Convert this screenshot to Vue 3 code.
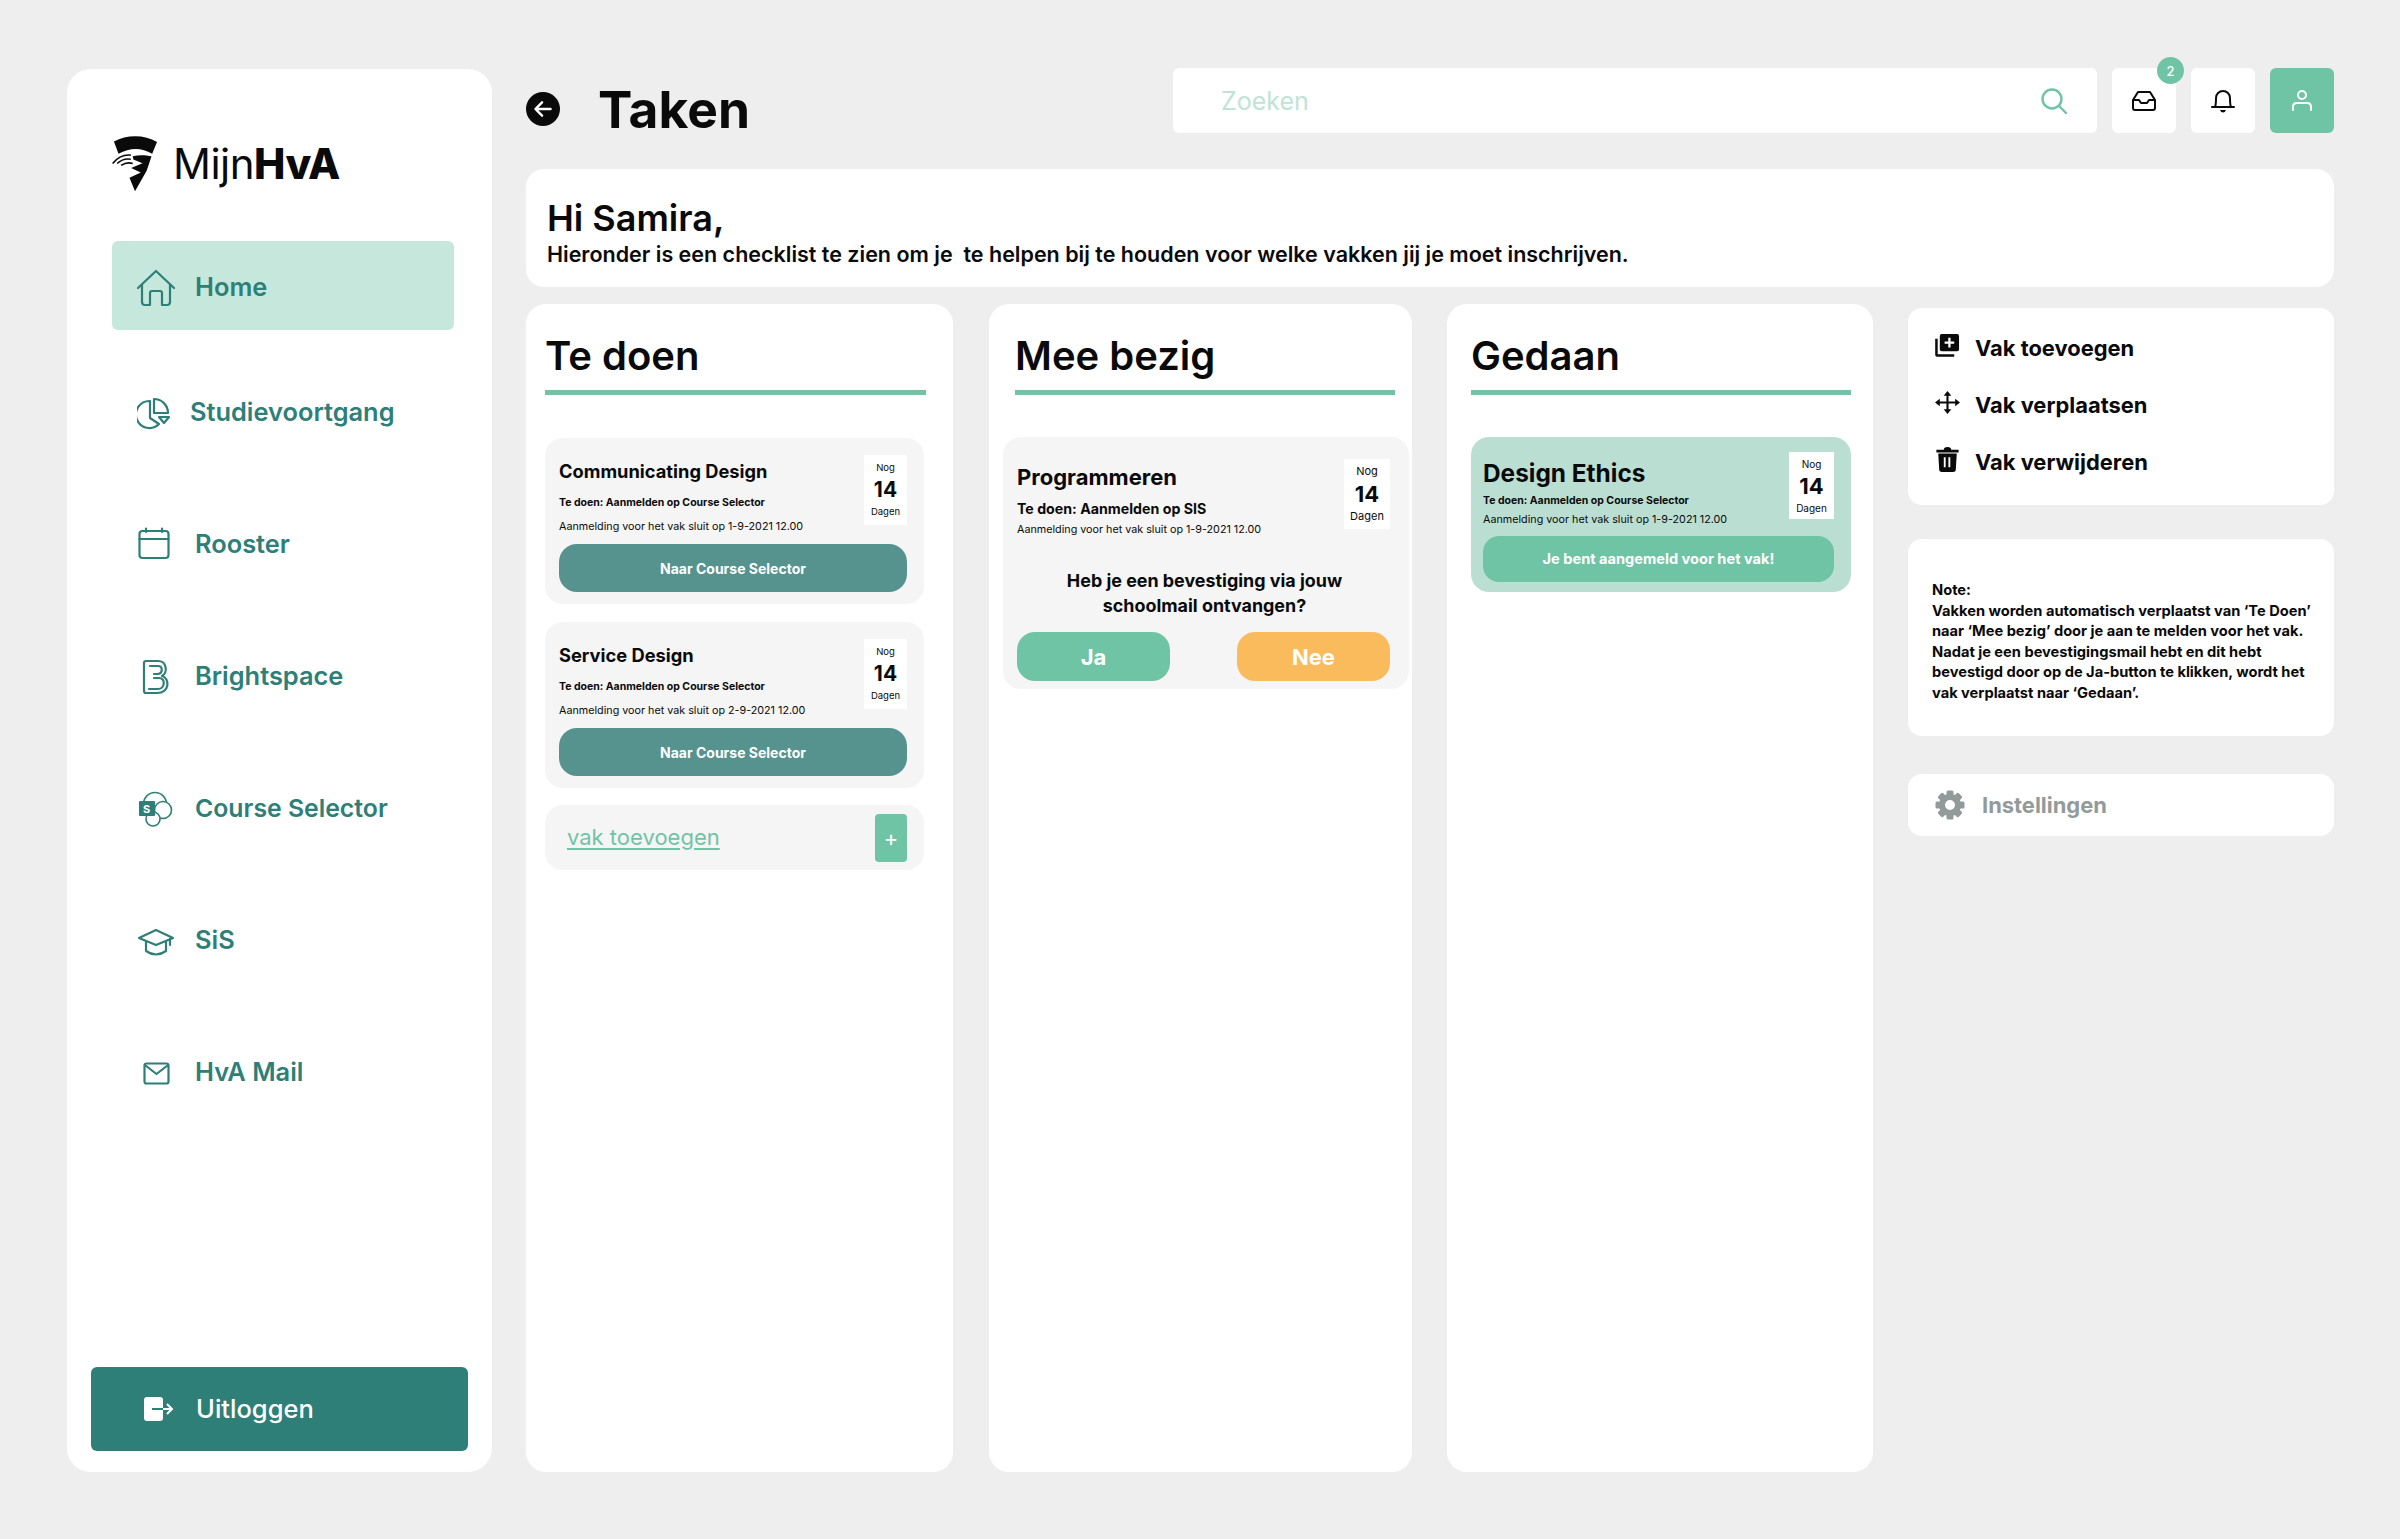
<script setup>
const navItems = [
  { label: 'Home', icon: 'home', active: true },
  { label: 'Studievoortgang', icon: 'chart' },
  { label: 'Rooster', icon: 'calendar' },
  { label: 'Brightspace', icon: 'bright' },
  { label: 'Course Selector', icon: 'course' },
  { label: 'SiS', icon: 'cap' },
  { label: 'HvA Mail', icon: 'mail' }
];

const todo = [
  { title: 'Communicating Design', date: '1-9-2021' },
  { title: 'Service Design', date: '2-9-2021' }
];
</script>

<template>
  <div class="page">
    <aside class="sidebar">
      <div class="logo">
        <svg class="logo-mark" viewBox="34 38 142 180">
          <path d="M40 60C80 38 135 38 173 62L158 98C125 78 90 78 54 98Z" fill="#0a0a0a" />
          <path d="M98 106C118 100 138 102 156 106L141 150L105 214L88 172L123 156L93 142L128 127L100 116Z" fill="#0a0a0a" />
          <path d="M36 128C50 110 68 100 92 102M50 128C62 117 78 112 92 115M62 134Q80 122 98 128" fill="none" stroke="#0a0a0a" stroke-width="5" />
        </svg>
        <span class="logo-text">Mijn<b>HvA</b></span>
      </div>

      <nav class="nav">
        <a v-for="item in navItems" :key="item.label" class="nav-item" :class="[item.icon, { active: item.active }]">
          <svg class="nav-icon" viewBox="0 0 38 38" fill="none" stroke="#2d7f77" stroke-width="2.200" stroke-linecap="round" stroke-linejoin="round">
            <template v-if="item.icon === 'home'">
              <path d="M1 19L19 2L37 19" />
              <path d="M5 16V33Q5 36 8 36H13V24Q13 22 15 22H23Q25 22 25 24V36H30Q33 36 33 33V16" />
            </template>
            <template v-if="item.icon === 'chart'">
              <path d="M13 7A13.500 13.500 0 1 0 22 30L13 24Z" />
              <path d="M17 5A14 14 0 0 1 31 19H17Z" />
              <path d="M22 23H32L27 29Z" />
            </template>
            <template v-if="item.icon === 'calendar'">
              <rect x="2.500" y="5" width="29" height="27" rx="3" />
              <path d="M2.500 13H31.500M9 2.500V6M25 2.500V6" />
            </template>
            <template v-if="item.icon === 'bright'">
              <path d="M9 3H21C30 3 31 15 25 18C33 20 33 35 20 35H9Q7 35 7 33V5Q7 3 9 3Z" />
              <path d="M13 8H21C26 8 26 15 21 16H17M17 20H22C29 20 28 31 21 31H12" />
            </template>
            <template v-if="item.icon === 'course'">
              <circle cx="18" cy="14" r="11.500" stroke-width="1.600" fill="#fff" />
              <circle cx="26" cy="20" r="8.500" stroke-width="1.600" fill="#fff" />
              <circle cx="16" cy="29" r="7" stroke-width="1.600" fill="#fff" />
              <rect x="2" y="11" width="16" height="15" rx="1" fill="#2d7f77" stroke="none" />
              <text x="6" y="23" class="icon-s">S</text>
            </template>
            <template v-if="item.icon === 'cap'">
              <path d="M19 8L36 16L19 23L2 16Z" />
              <path d="M9 20V29Q19 36 29 29V20M33 17V23" />
            </template>
            <template v-if="item.icon === 'mail'">
              <rect x="7.500" y="9.500" width="24" height="20" rx="2" />
              <path d="M8.500 11.500L19.500 20L30.500 11.500" />
            </template>
          </svg>
          <span>{{ item.label }}</span>
        </a>
      </nav>

      <a class="logout">
        <svg class="logout-icon" viewBox="0 0 29 24">
          <rect width="19" height="24" rx="3" fill="#fff" />
          <path d="M8 12H19" stroke="#2d7f77" stroke-width="2" />
          <path d="M19 12H27M23 7L28 12L23 17" fill="none" stroke="#fff" stroke-width="2" />
        </svg>
        <span>Uitloggen</span>
      </a>
    </aside>

    <main class="main">
      <header class="topbar">
        <div class="page-title">
          <span class="back">
            <svg viewBox="0 0 36 36"><circle cx="18" cy="18" r="18" fill="#0a0a0a" /><path d="M26 18H11M17 11L10 18L17 25" fill="none" stroke="#fff" stroke-width="2.600" stroke-linecap="round" stroke-linejoin="round" /></svg>
          </span>
          <h1>Taken</h1>
        </div>
        <div class="top-actions">
          <div class="search">
            <span>Zoeken</span>
            <svg viewBox="0 0 26 26" fill="none" stroke="#6fc4a5" stroke-width="2.400" stroke-linecap="round"><circle cx="11" cy="11" r="9.500" /><path d="M18 18L25 25" /></svg>
          </div>
          <div class="icon-btn">
            <svg width="24" height="20" viewBox="0 0 24 20" fill="none" stroke="#0a0a0a" stroke-width="2" stroke-linejoin="round"><path d="M6 1H18L23 9V17Q23 19 21 19H3Q1 19 1 17V9Z" /><path d="M1.500 9H7L9 12H15L17 9H22.500" /></svg>
            <span class="badge">2</span>
          </div>
          <div class="icon-btn">
            <svg width="24" height="24" viewBox="0 0 24 24" fill="none" stroke="#0a0a0a" stroke-width="2" stroke-linecap="round"><path d="M1 18H23M4 18C5 16 5 14 5 9A7 7 0 0 1 19 9C19 14 19 16 20 18" /><path d="M9 21H15Q14 23.500 12 23.500Q10 23.500 9 21Z" fill="#0a0a0a" stroke="none" /></svg>
          </div>
          <div class="icon-btn user">
            <svg width="20" height="21" viewBox="0 0 20 21" fill="none" stroke="#fff" stroke-width="2" stroke-linecap="round"><circle cx="10" cy="5" r="4" /><path d="M1 20V17Q1 13 5 13H15Q19 13 19 17V20" /></svg>
          </div>
        </div>
      </header>

      <section class="greeting">
        <h2>Hi Samira,</h2>
        <p>Hieronder is een checklist te zien om je&nbsp; te helpen bij te houden voor welke vakken jij je moet inschrijven.</p>
      </section>

      <div class="board">
        <section class="column col-todo">
          <h3>Te doen</h3>
          <div class="cards">
            <article v-for="c in todo" :key="c.title" class="card">
              <div class="card-top">
                <div>
                  <h4>{{ c.title }}</h4>
                  <p class="what">Te doen: Aanmelden op Course Selector</p>
                  <p class="when">Aanmelding voor het vak sluit op {{ c.date }} 12.00</p>
                </div>
                <div class="days"><small>Nog</small><b>14</b><small>Dagen</small></div>
              </div>
              <button class="btn-dark">Naar Course Selector</button>
            </article>
            <div class="add-row">
              <a>vak toevoegen</a>
              <span class="plus">+</span>
            </div>
          </div>
        </section>

        <section class="column col-busy">
          <h3>Mee bezig</h3>
          <article class="card card-busy">
            <div class="card-top">
              <div>
                <h4>Programmeren</h4>
                <p class="what">Te doen: Aanmelden op SIS</p>
                <p class="when">Aanmelding voor het vak sluit op 1-9-2021 12.00</p>
              </div>
              <div class="days"><small>Nog</small><b>14</b><small>Dagen</small></div>
            </div>
            <p class="question">Heb je een bevestiging via jouw schoolmail ontvangen?</p>
            <div class="answers">
              <button class="btn-yes">Ja</button>
              <button class="btn-no">Nee</button>
            </div>
          </article>
        </section>

        <section class="column col-done">
          <h3>Gedaan</h3>
          <article class="card card-done">
            <div class="card-top">
              <div>
                <h4>Design Ethics</h4>
                <p class="what">Te doen: Aanmelden op Course Selector</p>
                <p class="when">Aanmelding voor het vak sluit op 1-9-2021 12.00</p>
              </div>
              <div class="days"><small>Nog</small><b>14</b><small>Dagen</small></div>
            </div>
            <button class="btn-done">Je bent aangemeld voor het vak!</button>
          </article>
        </section>

        <div class="side">
          <div class="panel actions">
            <div class="action">
              <svg viewBox="0 0 26 24"><path d="M7 0H23Q25 0 25 2V16Q25 18 23 18H7Q5 18 5 16V2Q5 0 7 0Z" fill="#0a0a0a" /><path d="M15 4V14M10 9H20" stroke="#fff" stroke-width="2.400" /><path d="M1.500 5V21Q1.500 22.500 3 22.500H20" fill="none" stroke="#0a0a0a" stroke-width="2.600" /></svg>
              <span>Vak toevoegen</span>
            </div>
            <div class="action">
              <svg viewBox="0 0 26 24"><path d="M13 3V21M3 12H23" stroke="#0a0a0a" stroke-width="2.200" /><path d="M13 0L17 5H9ZM13 24L17 19H9ZM0 12L5 8V16ZM26 12L21 8V16Z" fill="#0a0a0a" /></svg>
              <span>Vak verplaatsen</span>
            </div>
            <div class="action">
              <svg viewBox="0 0 26 27"><path d="M9 3Q9 0 13 0Q17 0 17 3H25V6H1V3Z" fill="#0a0a0a" /><path d="M3 7H23L22 24Q22 27 19 27H7Q4 27 4 24Z" fill="#0a0a0a" /><path d="M10 11V22M15 11V22" stroke="#fff" stroke-width="2" /></svg>
              <span>Vak verwijderen</span>
            </div>
          </div>
          <div class="panel note">
            <p>Note:<br />Vakken worden automatisch verplaatst van ‘Te Doen’ naar ‘Mee bezig’ door je aan te melden voor het vak. Nadat je een bevestigingsmail hebt en dit hebt bevestigd door op de Ja-button te klikken, wordt het vak verplaatst naar ‘Gedaan’.</p>
          </div>
          <div class="panel settings">
            <svg viewBox="0 0 30 30">
              <rect v-for="a in [0, 45, 90, 135]" :key="a" x="11.500" y="0.500" width="7" height="29" rx="1.500" fill="#929a9a" :transform="`rotate(${a} 15 15)`" />
              <circle cx="15" cy="15" r="8" fill="#fff" stroke="#929a9a" stroke-width="6" />
            </svg>
            <span>Instellingen</span>
          </div>
        </div>
      </div>
    </main>
  </div>
</template>

<style scoped>
.page {
  width: 2400px;
  height: 1539px;
  box-sizing: border-box;
  padding: 68px 66px 67px 67px;
  display: flex;
  gap: 34px;
  font-family: Inter, "Open Sans", sans-serif;
  color: #0a0a0a;
}

.sidebar {
  width: 425px;
  margin-top: 1px;
  background: #fff;
  border-radius: 24px;
  display: flex;
  flex-direction: column;
  padding: 0 24px 21px;
  box-sizing: border-box;
}

.logo {
  display: flex;
  align-items: center;
  gap: 15px;
  margin: 64px 0 0 21px;
  height: 60px;
}
.logo-mark { width: 46px; height: 59px; flex: none; }
.logo-text { font-size: 42px; font-weight: 400; letter-spacing: -0.500px; }
.logo-text b { font-weight: 800; }

.nav { display: flex; flex-direction: column; margin-top: 48px; gap: 42px; }
.nav-item {
  height: 90px;
  margin: 0 14px 0 21px;
  padding-left: 25px;
  display: flex;
  align-items: center;
  gap: 20px;
  color: #2d7f77;
  font-size: 25.400px;
  font-weight: 600;
  border-radius: 6px;
}
.nav-item span { margin-top: -3px; }
.nav-item.active {
  background: #c6e7db;
  height: 89px;
  box-sizing: border-box;
  padding-top: 5px;
  margin-bottom: -4px;
}
.nav-item.chart { gap: 15px; }
.nav-item.course { font-size: 24.800px; }
.nav-icon { width: 38px; height: 38px; flex: none; }
.icon-s { font-size: 11px; font-weight: 700; fill: #fff; stroke: none; }

.logout {
  margin-top: auto;
  height: 84px;
  background: #2d7f77;
  border-radius: 6px;
  color: #fff;
  display: flex;
  align-items: center;
  gap: 23px;
  padding-left: 53px;
  font-size: 25.500px;
  font-weight: 500;
}
.logout span { margin-top: -2px; }
.logout-icon { width: 29px; height: 24px; }

.main { flex: 1; display: flex; flex-direction: column; min-width: 0; }

.topbar { display: flex; justify-content: space-between; height: 65px; }
.page-title { display: flex; align-items: center; gap: 38px; height: 80px; }
.back { width: 34px; height: 34px; margin-top: 2px; }
.back svg { width: 34px; height: 34px; display: block; }
h1 { font-size: 51.500px; font-weight: 700; margin: 2px 0 0; }

.top-actions { display: flex; gap: 15px; }
.search {
  width: 924px;
  height: 65px;
  background: #fff;
  border-radius: 6px;
  display: flex;
  align-items: center;
  justify-content: space-between;
  box-sizing: border-box;
  padding: 0 30px 0 48px;
  color: #bfe3d6;
  font-size: 25px;
}
.search svg { width: 26px; height: 26px; }
.icon-btn {
  position: relative;
  width: 64px;
  height: 65px;
  background: #fff;
  border-radius: 6px;
  display: flex;
  align-items: center;
  justify-content: center;
}
.icon-btn.user { background: #6fc4a5; }
.badge {
  position: absolute;
  top: -11px;
  right: -8px;
  width: 27px;
  height: 27px;
  border-radius: 50%;
  background: #6fc4a5;
  color: #fff;
  font-size: 13px;
  font-weight: 500;
  display: flex;
  align-items: center;
  justify-content: center;
}

.greeting {
  margin-top: 36px;
  height: 118px;
  box-sizing: border-box;
  background: #fff;
  border-radius: 18px;
  padding: 30px 21px 0;
}
h2 { font-size: 36px; font-weight: 600; line-height: 38px; margin: 0; }
.greeting p { font-size: 21.500px; font-weight: 600; line-height: 30px; margin: 2px 0 0; }

.board { flex: 1; display: flex; margin-top: 17px; gap: 35px; }

.column {
  background: #fff;
  border-radius: 20px;
  box-sizing: border-box;
}
.col-todo { width: 427px; padding: 0 29px 0 19px; }
.col-busy { width: 423px; padding: 0 3px 0 14px; margin-left: 1px; }
.col-done { width: 426px; padding: 0 22px 0 24px; }

h3 {
  font-size: 40px;
  font-weight: 600;
  line-height: 50px;
  margin: 0;
  padding: 27px 0 9px;
  border-bottom: 5px solid #6fc4a5;
}
.col-todo h3 { margin-right: -2px; }
.col-busy h3 { margin: 0 14px 0 12px; }

.cards { display: flex; flex-direction: column; gap: 18px; margin-top: 43px; }

.card {
  background: #f5f5f5;
  border-radius: 18px;
  box-sizing: border-box;
  padding: 17px 17px 0 14px;
  height: 166px;
}
.card-top { display: flex; justify-content: space-between; }
h4 { font-size: 18.300px; font-weight: 700; line-height: 28px; margin: 2px 0 0; }
.what { font-size: 10.500px; font-weight: 700; line-height: 14px; margin: 11px 0 0; }
.when { font-size: 10.750px; font-weight: 400; line-height: 14px; margin: 10px 0 0; white-space: nowrap; }

.days {
  width: 43px;
  height: 70px;
  background: #fff;
  display: flex;
  flex-direction: column;
  align-items: center;
  justify-content: center;
  flex: none;
}
.days small { font-size: 9.500px; line-height: 14px; }
.days b { font-size: 21px; line-height: 30px; }

button {
  border: none;
  font-family: inherit;
  color: #fff;
  display: block;
  width: 100%;
}
.btn-dark {
  height: 48px;
  margin-top: 10px;
  background: #56938e;
  border-radius: 18px;
  font-size: 14px;
  font-weight: 700;
}

.add-row {
  height: 65px;
  background: #f5f5f5;
  border-radius: 18px;
  display: flex;
  align-items: center;
  justify-content: space-between;
  padding: 0 17px 0 22px;
  margin-top: -1px;
}
.add-row a { color: #6fc4a5; font-size: 22px; margin-top: -2px; text-decoration: underline; text-underline-offset: 3px; }
.plus {
  width: 32px;
  height: 48px;
  background: #6fc4a5;
  border-radius: 4px;
  color: #fff;
  font-size: 22px;
  display: flex;
  align-items: center;
  justify-content: center;
}

.card-busy { height: 252px; margin-top: 42px; padding: 22px 19px 0 14px; }
.card-busy h4 { font-size: 22px; line-height: 28px; margin-top: 4px; }
.card-busy .what { font-size: 14.200px; margin-top: 9px; line-height: 18px; }
.card-busy .when { margin-top: 5px; }
.card-busy .days { width: 46px; }
.card-busy .days small { font-size: 11px; line-height: 15px; }
.card-busy .days b { font-size: 22px; line-height: 30px; }
.question {
  font-size: 17.900px;
  font-weight: 700;
  line-height: 25px;
  text-align: center;
  margin: 31px 22px 0 24px;
}
.answers { display: flex; justify-content: space-between; margin-top: 14px; }
.answers button { width: 153px; height: 49px; border-radius: 18px; font-size: 22px; font-weight: 700; }
.btn-yes { background: #6fc4a5; }
.btn-no { background: #fabb5c; }

.card-done { background: #badfd2; height: 155px; margin-top: 42px; padding: 15px 17px 0 12px; }
.card-done h4 { font-size: 24.400px; line-height: 32px; margin-top: 5px; }
.card-done .what { margin-top: 5px; }
.card-done .when { margin-top: 5px; }
.card-done .days { width: 45px; height: 67px; }
.card-done .days small { font-size: 10px; }
.card-done .days b { font-size: 22px; }
.btn-done {
  height: 46px;
  margin-top: 9px;
  background: #6fc4a5;
  border-radius: 16px;
  font-size: 14.600px;
  font-weight: 700;
}

.side { flex: 1; display: flex; flex-direction: column; padding-top: 4px; }
.panel { background: #fff; border-radius: 14px; box-sizing: border-box; }
.actions { height: 197px; padding: 26px 0 0 27px; display: flex; flex-direction: column; gap: 29px; }
.action { display: flex; align-items: center; gap: 15px; font-size: 21.900px; font-weight: 700; height: 28px; }
.action svg { width: 25px; height: 25px; flex: none; margin-top: -5px; }
.note { height: 197px; margin-top: 34px; padding: 41px 20px 0 24px; font-size: 14.650px; font-weight: 700; line-height: 20.600px; }
.note p { margin: 0; }
.settings {
  height: 62px;
  margin-top: 38px;
  display: flex;
  align-items: center;
  gap: 17px;
  padding-left: 27px;
  color: #929a9a;
  font-size: 21.900px;
  font-weight: 700;
}
.settings svg { width: 30px; height: 30px; }
</style>

<style>
body { background: #eeeeee; }
</style>
